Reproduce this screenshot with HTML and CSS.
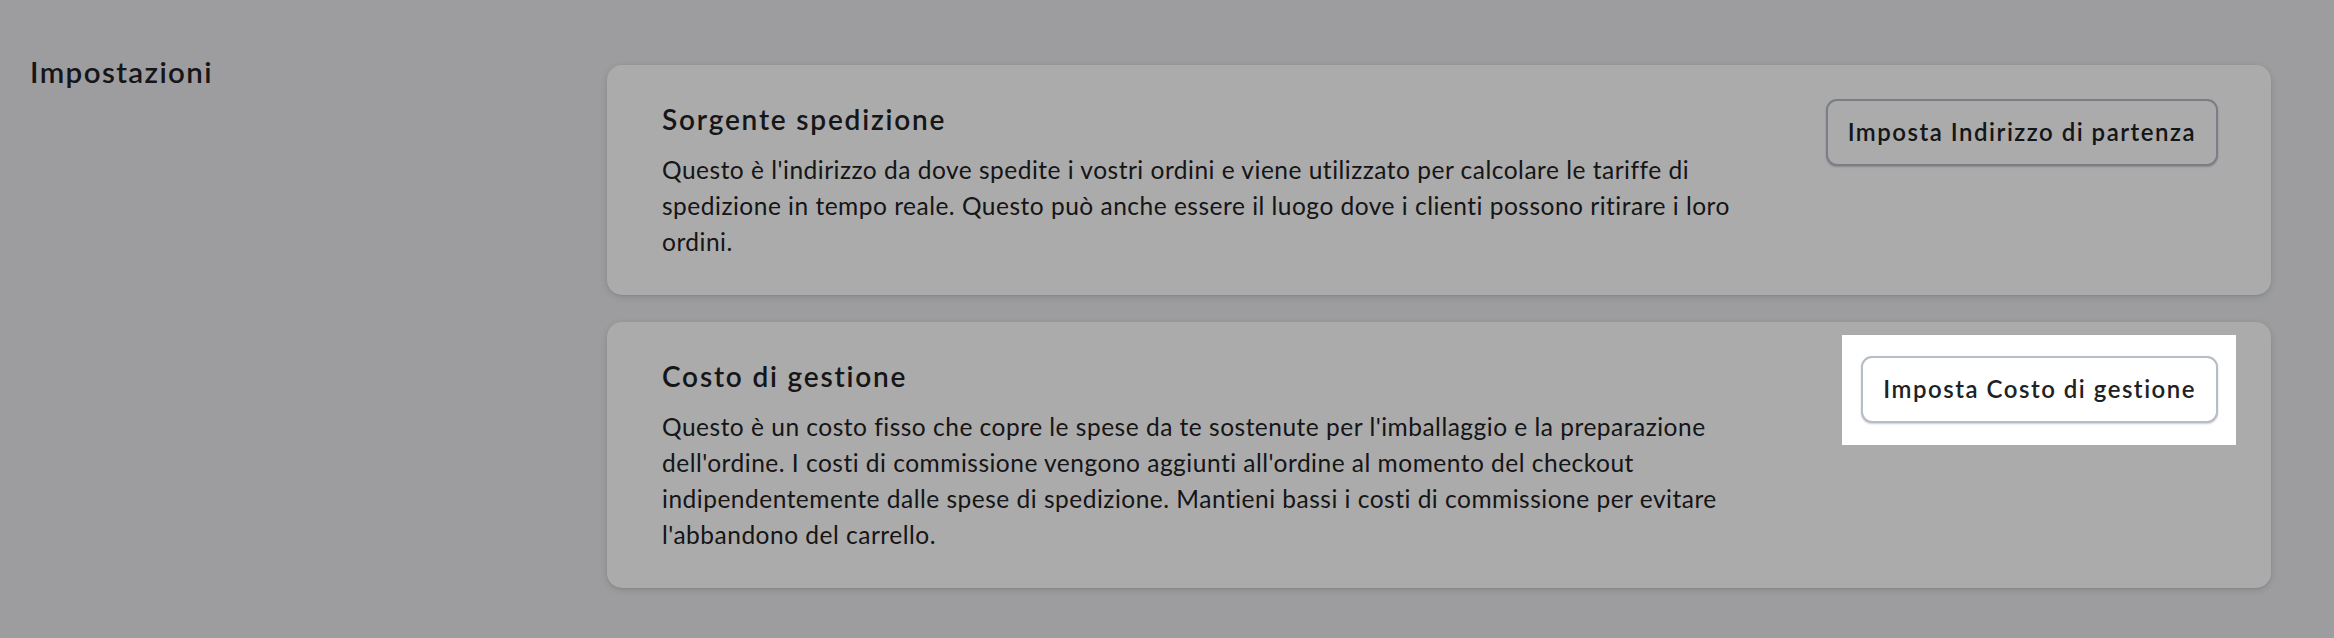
FILE: index.html
```html
<!DOCTYPE html>
<html lang="it">
<head>
<meta charset="utf-8">
<title>Impostazioni</title>
<link rel="stylesheet" href="styles.css">
</head>
<body>
<div class="page">
  <aside class="sidebar">
    <h1 class="page-title">Impostazioni</h1>
  </aside>
  <main class="cards">
    <section class="card">
      <div class="card-text">
        <h2 class="card-title">Sorgente spedizione</h2>
        <p class="card-desc">Questo è l'indirizzo da dove spedite i vostri ordini e viene utilizzato per calcolare le tariffe di spedizione in tempo reale. Questo può anche essere il luogo dove i clienti possono ritirare i loro ordini.</p>
      </div>
      <div class="card-action">
        <button class="btn" type="button">Imposta Indirizzo di partenza</button>
      </div>
    </section>
    <section class="card">
      <div class="card-text">
        <h2 class="card-title">Costo di gestione</h2>
        <p class="card-desc">Questo è un costo fisso che copre le spese da te sostenute per l'imballaggio e la preparazione dell'ordine. I costi di commissione vengono aggiunti all'ordine al momento del checkout indipendentemente dalle spese di spedizione. Mantieni bassi i costi di commissione per evitare l'abbandono del carrello.</p>
      </div>
      <div class="card-action">
        <span class="spotlight"></span>
        <button class="btn" type="button">Imposta Costo di gestione</button>
      </div>
    </section>
  </main>
</div>
</body>
</html>
```

FILE: styles.css
```css
html, body {
  margin: 0;
  padding: 0;
}

body {
  background: #eaebee;
  font-family: "Lato", "Inter", "Liberation Sans", sans-serif;
  color: #212224;
  width: 2334px;
  height: 638px;
  overflow: hidden;
}

.page {
  display: grid;
  grid-template-columns: 577px 1fr;
  padding: 54px 63px 0 30px;
}

.page-title {
  margin: 0;
  font-size: 29.5px;
  font-weight: 600;
  line-height: 1.2;
  letter-spacing: 1.4px;
}

.cards {
  display: flex;
  flex-direction: column;
  gap: 27px;
  padding-top: 11px;
}

.card {
  background: #ffffff;
  border-radius: 15px;
  box-shadow: 0 2px 8px rgba(0, 0, 0, 0.12), 0 1px 2px rgba(0, 0, 0, 0.08);
  padding: 34px 53px 35px 55px;
  display: flex;
  justify-content: space-between;
  align-items: flex-start;
}

.card-text {
  flex: 0 1 1085px;
}

.card-title {
  margin: 0;
  font-size: 28px;
  font-weight: 600;
  line-height: 40px;
  letter-spacing: 1.8px;
}

.card-desc {
  margin: 13px 0 0;
  font-size: 24.5px;
  line-height: 36px;
  font-weight: 400;
  letter-spacing: 0.5px;
}

.card-action {
  position: relative;
  flex-shrink: 0;
}

.btn {
  display: block;
  font-family: inherit;
  font-size: 24px;
  font-weight: 600;
  line-height: 28.8px;
  letter-spacing: 1.5px;
  color: #202124;
  background: #ffffff;
  border: 2px solid #b6bdc8;
  border-radius: 11px;
  padding: 17px 20px;
  box-shadow: 0 1px 2px rgba(0, 0, 0, 0.2);
  cursor: pointer;
}

.spotlight {
  position: absolute;
  inset: -21px -18px -22px -19px;
  box-shadow: 0 0 0 4000px rgba(0, 0, 0, 0.33);
  pointer-events: none;
  z-index: 10;
}
```
